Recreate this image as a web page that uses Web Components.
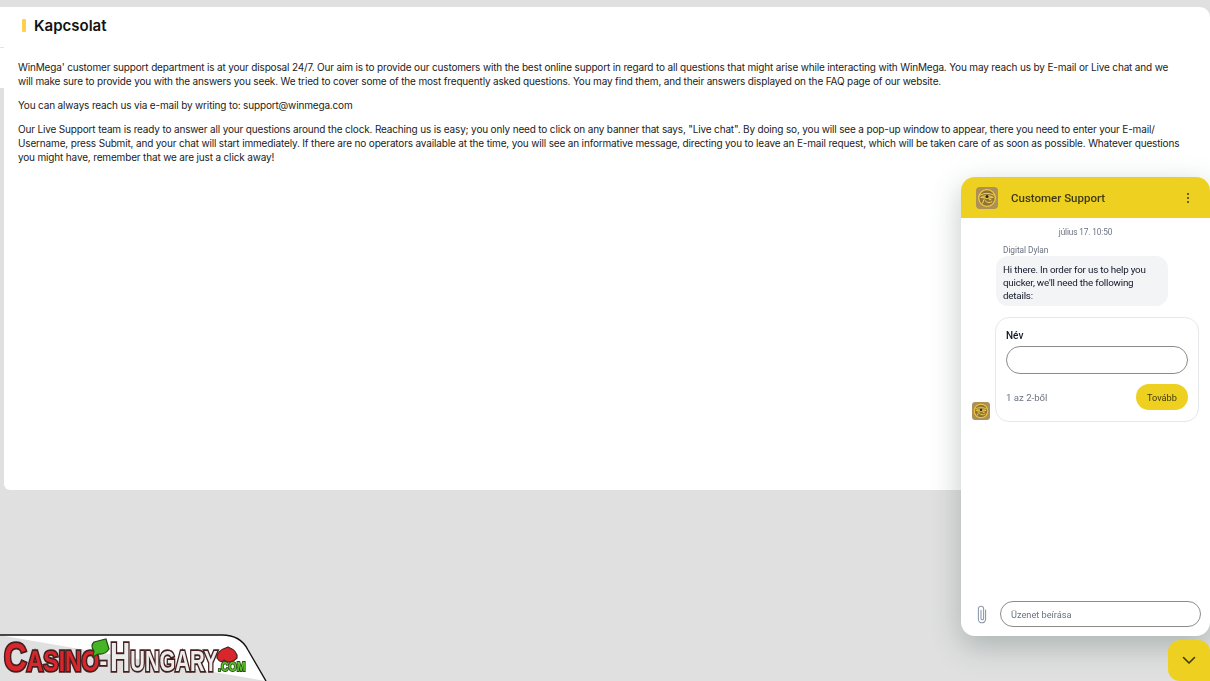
<!DOCTYPE html>
<html lang="hu">
<head>
<meta charset="utf-8">
<title>Kapcsolat</title>
<style>
    html, body { margin: 0; height: 100%; overflow: hidden; background: #e0e0e0; }
    body { font-family: "Inter", "Liberation Sans", sans-serif; }
</style>
</head>
<body>
<contact-page>
    <span slot="title">Kapcsolat</span>
    <p>WinMega' customer support department is at your disposal 24/7. Our aim is to provide our customers with the best online support in regard to all questions that might arise while interacting with WinMega. You may reach us by E-mail or Live chat and we will make sure to provide you with the answers you seek. We tried to cover some of the most frequently asked questions. You may find them, and their answers displayed on the FAQ page of our website.</p>
    <p>You can always reach us via e-mail by writing to: support@winmega.com</p>
    <p>Our Live Support team is ready to answer all your questions around the clock. Reaching us is easy; you only need to click on any banner that says, "Live chat". By doing so, you will see a pop-up window to appear, there you need to enter your E-mail/ Username, press Submit, and your chat will start immediately. If there are no operators available at the time, you will see an informative message, directing you to leave an E-mail request, which will be taken care of as soon as possible. Whatever questions you might have, remember that we are just a click away!</p>
</contact-page>
<chat-widget></chat-widget>
<site-badge></site-badge>

<script>
// small eye-of-horus avatar, used in the chat header and next to the form
const avatarSvg = (size) => `
<svg width="${size}" height="${size}" viewBox="0 0 22 22" aria-hidden="true">
    <rect width="22" height="22" rx="4" fill="#ad8f58"/>
    <circle cx="11" cy="11" r="8.3" fill="#8f7436" stroke="#efc93f" stroke-width="1.3"/>
    <path d="M4 8.2 Q11 4.6 18 8.2" fill="none" stroke="#f3d34f" stroke-width="1"/>
    <path d="M4.6 10.4 Q11 6.6 17.4 10.4 Q11 12.6 4.6 10.4Z" fill="#c9a73e" stroke="#f3d34f" stroke-width=".8"/>
    <circle cx="11" cy="9.6" r="1.5" fill="#2c2410"/>
    <path d="M8 12.4 L6.4 16.6 M8.6 13 Q12 17.4 16.4 14.4 M13 12.6 L15.4 12.8" stroke="#f6d65a" stroke-width="1" fill="none"/>
</svg>`;

class ContactPage extends HTMLElement {
    constructor() {
        super();
        this.attachShadow({mode: 'open'});
        this.shadowRoot.innerHTML = `
<style>
    :host { display: block; padding-top: 7px; }
    .sheet { display: flex; }
    .rail { width: 4px; height: 81px; background: #fff; flex: none; }
    .rail i { display: block; height: 40px; border-bottom: 1px solid #e4e4e4; }
    .card {
        flex: 1;
        height: 483px;
        box-sizing: border-box;
        background: #fff;
        border-top-right-radius: 10px;
        border-bottom-left-radius: 6px;
    }
    h1 {
        display: flex;
        align-items: center;
        gap: 8px;
        margin: 0;
        height: 37px;
        padding-left: 18px;
        font: 600 15px "Inter", sans-serif;
        color: #111;
    }
    h1::before { content: ""; width: 4px; height: 13px; border-radius: 1px; background: #ffd04f; }
    .text {
        padding: 16px 26px 0 14px;
        font: 400 10px/14px "Inter", sans-serif;
        letter-spacing: -.16px;
        color: #222;
    }
    ::slotted(p) { margin: 0 0 10px; }
</style>
<div class="sheet">
    <div class="rail"><i></i></div>
    <section class="card">
        <h1><slot name="title"></slot></h1>
        <div class="text"><slot></slot></div>
    </section>
</div>`;
    }
}

class ChatWidget extends HTMLElement {
    constructor() {
        super();
        this.attachShadow({mode: 'open'});
        this.shadowRoot.innerHTML = `
<style>
    :host {
        position: fixed;
        right: 0;
        top: 177px;
        width: 249px;
        font-family: Roboto, "Noto Sans", sans-serif;
        font-size: 10px;
        color: #111827;
    }
    .panel {
        height: 459px;
        display: flex;
        flex-direction: column;
        background: #fff;
        border-radius: 14px;
        overflow: hidden;
        box-shadow: 0 10px 30px rgba(60, 85, 80, .32);
    }
    header {
        flex: none;
        height: 41px;
        display: flex;
        align-items: center;
        gap: 13px;
        padding: 0 20px 0 15px;
        background: #edd020;
        font-size: 11.5px;
        font-weight: 500;
        color: #3f3a14;
    }
    header .name { flex: 1; }
    header svg { display: block; }
    .log { flex: 1; display: flex; flex-direction: column; padding: 8px 11px 0 11px; }
    .date { text-align: center; font-size: 8.2px; line-height: 12px; letter-spacing: -.1px; color: #6b7280; }
    .who { margin: 6px 0 0 31px; font-size: 8.3px; line-height: 12px; letter-spacing: -.05px; color: #6b7280; }
    .bubble {
        width: 172px;
        box-sizing: border-box;
        margin: 0 0 0 24px;
        padding: 7px 7px 4px;
        background: #f3f4f6;
        border-radius: 12px;
        font-size: 9.8px;
        line-height: 13px;
        letter-spacing: -.2px;
    }
    .row { display: flex; align-items: flex-end; gap: 5px; margin-top: 11px; }
    .row svg { display: block; margin-bottom: 2px; flex: none; }
    .form {
        width: 204px;
        height: 105px;
        box-sizing: border-box;
        padding: 11px 10px;
        border: 1px solid #e5e7eb;
        border-radius: 14px;
    }
    label { display: block; font-size: 10px; line-height: 13px; font-weight: 500; }
    .field {
        height: 28px;
        margin-top: 4px;
        box-sizing: border-box;
        border: 1px solid #8c8c8c;
        border-radius: 14px;
    }
    .steps { display: flex; align-items: center; justify-content: space-between; margin-top: 10px; font-size: 9.6px; color: #6b7280; }
    .next {
        width: 52px;
        height: 26px;
        display: flex;
        align-items: center;
        justify-content: center;
        border-radius: 13px;
        background: #edd020;
        color: #3f3a14;
        font-size: 9.2px;
    }
    .compose { flex: none; display: flex; align-items: center; gap: 12px; padding: 0 9px 9px 15px; }
    .compose svg { flex: none; display: block; }
    .input {
        flex: 1;
        height: 26px;
        box-sizing: border-box;
        display: flex;
        align-items: center;
        padding-left: 10px;
        border: 1px solid #8c8c8c;
        border-radius: 13px;
        font-size: 9.2px;
        color: #6b7280;
    }
    .toggle {
        position: fixed;
        right: 0;
        bottom: 0;
        width: 42px;
        height: 41px;
        display: flex;
        align-items: center;
        justify-content: center;
        background: #edd020;
        border-radius: 12px 12px 0 12px;
    }
</style>
<div class="panel">
    <header>
        ${avatarSvg(22)}
        <span class="name">Customer Support</span>
        <svg width="4" height="12" viewBox="0 0 4 12"><g fill="#4a4520"><circle cx="2" cy="2" r="1.1"/><circle cx="2" cy="6" r="1.1"/><circle cx="2" cy="10" r="1.1"/></g></svg>
    </header>
    <div class="log">
        <div class="date">július 17. 10:50</div>
        <div class="who">Digital Dylan</div>
        <div class="bubble">Hi there. In order for us to help you quicker, we'll need the following details:</div>
        <div class="row">
            ${avatarSvg(18)}
            <div class="form">
                <label>Név</label>
                <div class="field"></div>
                <div class="steps"><span>1 az 2-ből</span><span class="next">Tovább</span></div>
            </div>
        </div>
    </div>
    <div class="compose">
        <svg width="12" height="19" viewBox="0 0 12 19" fill="none" stroke="#8f9bab" stroke-width="1.1" stroke-linecap="round"><path d="M9.6 5v9.2a3.6 3.6 0 0 1-7.2 0V3.8a2.6 2.6 0 0 1 5.2 0v9.6a1.3 1.3 0 0 1-2.6 0V5.4"/></svg>
        <div class="input">Üzenet beírása</div>
    </div>
</div>
<div class="toggle">
    <svg width="14" height="9" viewBox="0 0 14 9" fill="none" stroke="#3f3a14" stroke-width="1.6" stroke-linecap="round" stroke-linejoin="round"><path d="M1.5 1.5 7 7l5.5-5.5"/></svg>
</div>`;
    }
}

class SiteBadge extends HTMLElement {
    constructor() {
        super();
        this.attachShadow({mode: 'open'});
        this.shadowRoot.innerHTML = `
<style>
    :host { position: fixed; left: 0; bottom: 0; width: 268px; height: 47px; }
    svg { position: absolute; left: 0; top: 0; display: block; }
    .word {
        position: absolute;
        top: 4px;
        font: 900 40px/38px "Liberation Sans", sans-serif;
        -webkit-text-stroke: 3.6px #43201f;
        paint-order: stroke fill;
        white-space: nowrap;
        transform-origin: 0 50%;
    }
    .word small { font-size: 29px; }
    .word b { color: #ececec; }
    .casino { left: 4px; color: #d8262c; transform: scaleX(.79); }
    .hungary { left: 110px; color: #ececec; transform: scaleX(.7); }
    .com {
        position: absolute;
        left: 218px;
        top: 25px;
        font: 900 12px/16px "Liberation Sans", sans-serif;
        color: #5fc52c;
        -webkit-text-stroke: 1.8px #254a14;
        paint-order: stroke fill;
        transform: scaleX(.88);
        transform-origin: 0 50%;
    }
</style>
<svg width="268" height="47" viewBox="0 0 268 47">
    <path d="M-2 1H222C234 1 243 6 248 16L266 47" fill="#fff" stroke="#111" stroke-width="1.4"/>
</svg>
<span class="word casino">C<small>ASINO<b>-</b></small></span>
<span class="word hungary">H<small>UNGARY</small></span>
<svg width="268" height="47" viewBox="0 0 268 47">
    <path d="M94 8 L106 5 L109 15 Q105 21 98 20 L93 23 L94 17 Q90 12 94 8Z" fill="#45b526" stroke="#254a14" stroke-width="1.2"/>
    <path d="M217 24 Q216 17 228 13 Q238 17 237 24 Q230 31 224 26 Q221 30 217 24Z" fill="#d8262c" stroke="#43201f" stroke-width="1.2"/>
</svg>
<span class="com">.COM</span>`;
    }
}

customElements.define('contact-page', ContactPage);
customElements.define('chat-widget', ChatWidget);
customElements.define('site-badge', SiteBadge);
</script>
</body>
</html>
